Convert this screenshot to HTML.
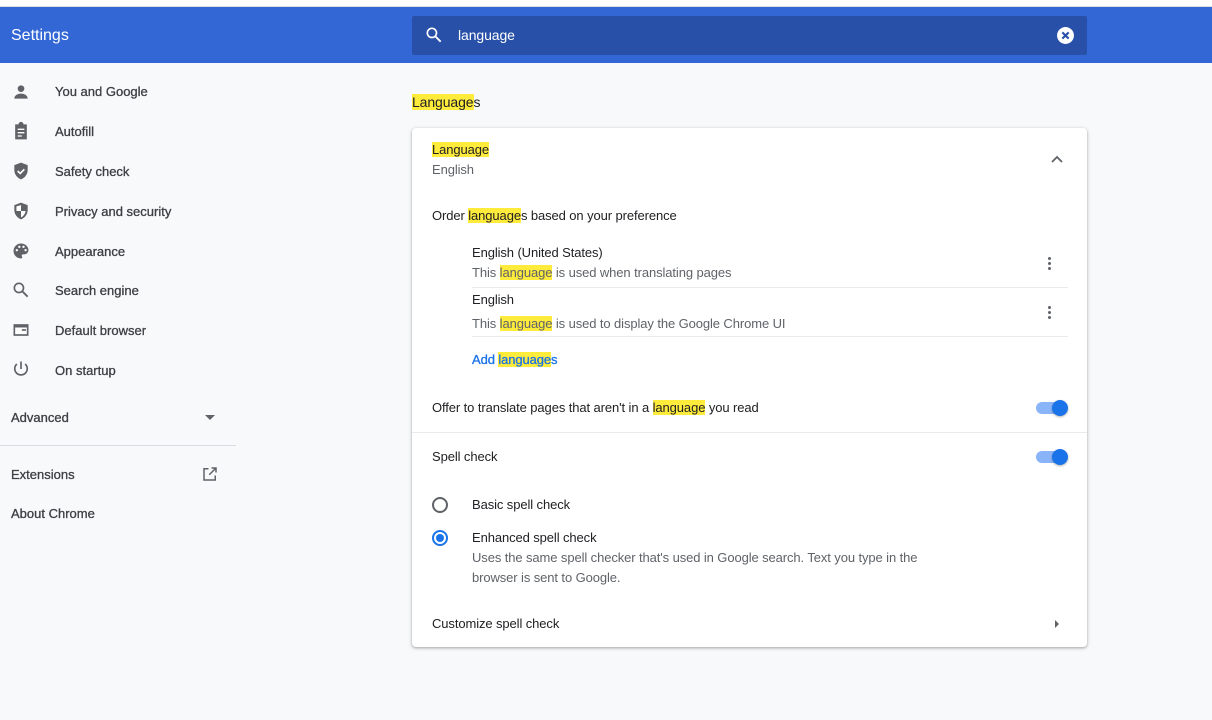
<!DOCTYPE html>
<html><head><style>
*{margin:0;padding:0;box-sizing:border-box}
body{width:1212px;height:720px;background:#f8f9fa;font-family:"Liberation Sans",sans-serif;font-size:13px;color:#202124;position:relative;overflow:hidden;letter-spacing:-0.1px}
.a{position:absolute;white-space:nowrap}
.hl{background:#ffeb3b}
.g{color:#5f6368}
.nav{color:#3c4043;font-size:13px;letter-spacing:0;-webkit-text-stroke:0.3px #3c4043}
.ic{position:absolute;left:11px}
.tog{position:absolute;width:30px;height:12px;border-radius:6px;background:#8ab4f8}
.tog:after{content:"";position:absolute;right:-2px;top:-2px;width:16px;height:16px;border-radius:50%;background:#1a73e8;box-shadow:0 1px 2px rgba(0,0,0,.3)}
.dots{position:absolute;width:3px}
.dots i{display:block;width:3px;height:3px;border-radius:50%;background:#5f6368;margin-bottom:2px}
</style></head><body>
<div class="a" style="left:0;top:0;width:1212px;height:7px;background:#fff;border-bottom:1px solid #dadce0"></div>
<div class="a" style="left:0;top:7px;width:1212px;height:56px;background:#3367d6"></div>
<div class="a" style="left:11px;top:27px;color:#fff;font-size:16px;letter-spacing:0">Settings</div>
<div class="a" style="left:412px;top:16px;width:675px;height:39px;background:#2850a8;border-radius:2px"></div>
<svg class="a" style="left:424px;top:25px" width="20" height="20" viewBox="0 0 24 24"><circle cx="9.5" cy="9.5" r="5.5" fill="none" stroke="#fff" stroke-width="2"/><path d="M14 14l6 6" stroke="#fff" stroke-width="2.2"/></svg>
<div class="a" style="left:458px;top:27px;color:#fff;font-size:14px">language</div>
<svg class="a" style="left:1056px;top:26px" width="19" height="19" viewBox="0 0 18 18"><circle cx="9" cy="9" r="8" fill="#fff"/><path d="M6 6l6 6M12 6l-6 6" stroke="#2850a8" stroke-width="2"/></svg>

<svg class="ic" style="top:82px" width="20" height="20" viewBox="0 0 24 24" fill="#5f6368"><circle cx="12" cy="8" r="4"/><path d="M4 20c0-4 4-6 8-6s8 2 8 6z"/></svg>
<div class="a nav" style="left:55px;top:84px">You and Google</div>
<svg class="ic" style="top:121px" width="20" height="20" viewBox="0 0 24 24" fill="#5f6368"><path d="M5 4h4a3 3 0 016 0h4v18H5z"/><path d="M8 10h8M8 14h8M8 18h5" stroke="#fff" stroke-width="1.6"/></svg>
<div class="a nav" style="left:55px;top:124px">Autofill</div>
<svg class="ic" style="top:161px" width="20" height="20" viewBox="0 0 24 24" fill="#5f6368"><path d="M12 2l8 3v6c0 5-3.5 9.5-8 11-4.5-1.5-8-6-8-11V5z"/><path d="M8 12l3 3 5-5" stroke="#fff" stroke-width="2" fill="none"/></svg>
<div class="a nav" style="left:55px;top:164px">Safety check</div>
<svg class="ic" style="top:201px" width="20" height="20" viewBox="0 0 24 24" fill="#5f6368"><path d="M12 2l8 3v6c0 5-3.5 9.5-8 11-4.5-1.5-8-6-8-11V5z"/><path d="M12 5v7H6.5V6.5zM12 12h5.5c-.5 3.5-2.8 6.5-5.5 7.7z" fill="#fff"/></svg>
<div class="a nav" style="left:55px;top:204px">Privacy and security</div>
<svg class="ic" style="top:241px" width="20" height="20" viewBox="0 0 24 24" fill="#5f6368"><path d="M12 3a9 9 0 000 18c1 0 1.5-.7 1.5-1.5 0-.9-.7-1.2-.7-2 0-.8.7-1.5 1.5-1.5H16a5 5 0 005-5c0-4.4-4-8-9-8z"/><circle cx="7" cy="11" r="1.4" fill="#fff"/><circle cx="10" cy="7" r="1.4" fill="#fff"/><circle cx="15" cy="7" r="1.4" fill="#fff"/><circle cx="17.5" cy="11" r="1.4" fill="#fff"/></svg>
<div class="a nav" style="left:55px;top:244px">Appearance</div>
<svg class="ic" style="top:280px" width="20" height="20" viewBox="0 0 24 24"><circle cx="9.5" cy="9.5" r="5.5" fill="none" stroke="#5f6368" stroke-width="2"/><path d="M14 14l6 6" stroke="#5f6368" stroke-width="2.2"/></svg>
<div class="a nav" style="left:55px;top:283px">Search engine</div>
<svg class="ic" style="top:320px" width="20" height="20" viewBox="0 0 24 24" fill="#5f6368"><path d="M3 5h18v14H3z"/><path d="M5 9h14v8H5z" fill="#fff"/><path d="M13 11h5v2h-5z"/></svg>
<div class="a nav" style="left:55px;top:323px">Default browser</div>
<svg class="ic" style="top:359px" width="20" height="20" viewBox="0 0 24 24" fill="none" stroke="#5f6368" stroke-width="2"><path d="M12 3v9"/><path d="M7 6a7.5 7.5 0 1010 0"/></svg>
<div class="a nav" style="left:55px;top:363px">On startup</div>
<div class="a nav" style="left:11px;top:410px">Advanced</div>
<div class="a" style="left:205px;top:415px;border:5px solid transparent;border-top-color:#5f6368;border-bottom:0"></div>
<div class="a" style="left:0;top:445px;width:236px;height:1px;background:#dadce0"></div>
<div class="a nav" style="left:11px;top:467px">Extensions</div>
<svg class="a" style="left:201px;top:465px" width="18" height="18" viewBox="0 0 24 24" fill="none" stroke="#5f6368" stroke-width="2"><path d="M19 14v6H4V5h6"/><path d="M14 4h6v6M20 4l-9 9"/></svg>
<div class="a nav" style="left:11px;top:506px">About Chrome</div>

<div class="a" style="left:412px;top:94px;font-size:14px"><span class="hl">Language</span>s</div>
<div class="a" style="left:412px;top:128px;width:675px;height:519px;background:#fff;border-radius:4px;box-shadow:0 1px 2px rgba(60,64,67,.3),0 1px 3px 1px rgba(60,64,67,.15)"></div>
<div class="a" style="left:432px;top:142px"><span class="hl">Language</span></div>
<div class="a g" style="left:432px;top:162px">English</div>
<svg class="a" style="left:1050px;top:154px" width="14" height="10" viewBox="0 0 14 10"><path d="M2 8l5-5 5 5" fill="none" stroke="#5f6368" stroke-width="1.8"/></svg>
<div class="a" style="left:432px;top:208px">Order <span class="hl">language</span>s based on your preference</div>
<div class="a" style="left:472px;top:245px">English (United States)</div>
<div class="a g" style="left:472px;top:265px">This <span class="hl">language</span> is used when translating pages</div>
<div class="dots" style="left:1048px;top:257px"><i></i><i></i><i></i></div>
<div class="a" style="left:472px;top:287px;width:596px;height:1px;background:#e8eaed"></div>
<div class="a" style="left:472px;top:292px">English</div>
<div class="a g" style="left:472px;top:316px">This <span class="hl">language</span> is used to display the Google Chrome UI</div>
<div class="dots" style="left:1048px;top:306px"><i></i><i></i><i></i></div>
<div class="a" style="left:472px;top:336px;width:596px;height:1px;background:#e8eaed"></div>
<div class="a" style="left:472px;top:352px;color:#1a73e8;-webkit-text-stroke:0.3px #1a73e8">Add <span class="hl">language</span>s</div>
<div class="a" style="left:432px;top:400px">Offer to translate pages that aren't in a <span class="hl">language</span> you read</div>
<div class="tog" style="left:1036px;top:402px"></div>
<div class="a" style="left:412px;top:432px;width:675px;height:1px;background:#e8eaed"></div>
<div class="a" style="left:432px;top:449px">Spell check</div>
<div class="tog" style="left:1036px;top:451px"></div>
<div class="a" style="left:432px;top:497px;width:16px;height:16px;border:2px solid #5f6368;border-radius:50%"></div>
<div class="a" style="left:472px;top:497px">Basic spell check</div>
<div class="a" style="left:432px;top:530px;width:16px;height:16px;border:2px solid #1a73e8;border-radius:50%"></div>
<div class="a" style="left:436px;top:534px;width:8px;height:8px;background:#1a73e8;border-radius:50%"></div>
<div class="a" style="left:472px;top:530px">Enhanced spell check</div>
<div class="a g" style="left:472px;top:550px">Uses the same spell checker that's used in Google search. Text you type in the</div>
<div class="a g" style="left:472px;top:570px">browser is sent to Google.</div>
<div class="a" style="left:432px;top:616px">Customize spell check</div>
<div class="a" style="left:1055px;top:620px;border:4px solid transparent;border-left:4px solid #5f6368;border-right:0"></div>
</body></html>
